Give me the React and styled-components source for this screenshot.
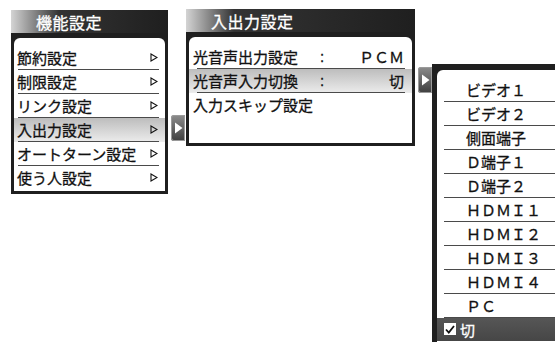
import React from "react";
import styled, { createGlobalStyle } from "styled-components";

const GlobalStyle = createGlobalStyle`
  html, body {
    margin: 0;
    padding: 0;
    background: #ffffff;
    overflow: hidden;
  }
  body {
    font-family: "Noto Sans CJK JP", "Liberation Sans", sans-serif;
    color: #111;
  }
`;

const Screen = styled.div`
  width: 555px;
  height: 342px;
  display: flex;
  align-items: flex-start;
  padding: 9px 0 0 11px;
  box-sizing: border-box;
  overflow: hidden;
`;

const Panel = styled.div`
  width: ${(p) => p.$width}px;
  margin-top: ${(p) => p.$top || 0}px;
  margin-right: ${(p) => p.$gapRight || 0}px;
  flex-shrink: 0;
  display: flex;
  flex-direction: column;
`;

const Header = styled.div`
  height: 23px;
  display: flex;
  align-items: center;
  padding-left: 25px;
  background: linear-gradient(to right, #d4d4d4 0px, #333 48px, #1f1f1f 100%);
  color: #fff;
  font-size: 16px;
  font-weight: 400;
  -webkit-text-stroke: 0.3px #fff;
  letter-spacing: 0.5px;
`;

const Frame = styled.div`
  background: #1f1f1f;
  padding: ${(p) => (p.$open ? "6px 0 0 5px" : "5px 3px 3px 3px")};
`;

const Sheet = styled.div`
  background: #fff;
  border-radius: ${(p) => (p.$open ? "6px 0 0 0" : "6px 6px 0 0")};
  padding-top: 8px;
  height: ${(p) => p.$height}px;
  box-sizing: border-box;
`;

const Row = styled.div`
  position: relative;
  height: 24px;
  display: flex;
  align-items: center;
  padding: 0 ${(p) => p.$padRight || 0}px 1px ${(p) => p.$padLeft}px;
  box-sizing: border-box;
  font-size: 15px;
  font-weight: 400;
  -webkit-text-stroke: 0.3px currentColor;
  background: ${(p) =>
    p.$active ? "linear-gradient(to bottom, #bdbdbd, #ececec)" : "transparent"};

  &::after {
    content: "";
    display: ${(p) => (p.$last ? "none" : "block")};
    position: absolute;
    left: ${(p) => p.$lineLeft}px;
    right: ${(p) => p.$lineRight}px;
    bottom: 0;
    height: 1px;
    background: #4a4a4a;
  }
`;

const Label = styled.span`
  flex: ${(p) => (p.$fixed ? "0 0 127px" : "1")};
`;

const Colon = styled.span`
  font-family: "Liberation Sans", sans-serif;
`;

const Value = styled.span`
  flex: 1;
  text-align: right;
`;

const ChoiceRow = styled(Row)`
  background: ${(p) => (p.$selected ? "linear-gradient(to bottom, #565656, #464646)" : "transparent")};
  color: ${(p) => (p.$selected ? "#fff" : "#111")};
  height: ${(p) => (p.$selected ? 23 : 24)}px;
`;

const Check = styled.span`
  width: 12px;
  height: 12px;
  background: #fff;
  margin-right: 4px;
  display: flex;
  align-items: center;
  justify-content: center;
`;

const Connector = styled.div`
  width: 14px;
  height: 26px;
  margin-top: ${(p) => p.$top}px;
  margin-right: ${(p) => p.$gapRight}px;
  flex-shrink: 0;
  border-radius: 3px 0 0 3px;
  background: linear-gradient(to bottom, #8c8c8c, #3e3e3e);
  box-shadow: inset 0 0 0 1px #9a9a9a;
  display: flex;
  align-items: center;
  justify-content: center;
`;

const Arrow = () => (
  <svg width="8" height="9" viewBox="0 0 8 9">
    <polygon points="1,1 7,4.5 1,8" fill="none" stroke="#111" strokeWidth="1.1" />
  </svg>
);

const Pointer = () => (
  <svg width="9" height="12" viewBox="0 0 9 12">
    <polygon points="1,0.5 8.5,6 1,11.5" fill="#fff" />
  </svg>
);

const mainItems = [
  "節約設定",
  "制限設定",
  "リンク設定",
  "入出力設定",
  "オートターン設定",
  "使う人設定",
];

const ioItems = [
  { label: "光音声出力設定", value: "ＰＣＭ" },
  { label: "光音声入力切換", value: "切", active: true },
  { label: "入力スキップ設定" },
];

const inputs = [
  "ビデオ１",
  "ビデオ２",
  "側面端子",
  "Ｄ端子１",
  "Ｄ端子２",
  "ＨＤＭＩ１",
  "ＨＤＭＩ２",
  "ＨＤＭＩ３",
  "ＨＤＭＩ４",
  "ＰＣ",
];

const App = () => {
  return (
    <>
      <GlobalStyle />
      <Screen>
        <Panel $width={157} $top={1} $gapRight={3}>
          <Header>機能設定</Header>
          <Frame>
            <Sheet $height={153}>
              {mainItems.map((item, i) => (
                <Row
                  key={item}
                  $padLeft={3}
                  $padRight={7}
                  $lineLeft={4}
                  $lineRight={6}
                  $active={item === "入出力設定"}
                  $last={i === mainItems.length - 1}
                >
                  <Label>{item}</Label>
                  <Arrow />
                </Row>
              ))}
            </Sheet>
          </Frame>
        </Panel>

        <Connector $top={106} $gapRight={1}>
          <Pointer />
        </Connector>

        <Panel $width={229} $gapRight={3}>
          <Header>入出力設定</Header>
          <Frame>
            <Sheet $height={106}>
              {ioItems.map((item, i) => (
                <Row
                  key={item.label}
                  $padLeft={4}
                  $padRight={8}
                  $lineLeft={8}
                  $lineRight={7}
                  $active={item.active}
                  $last={i === ioItems.length - 1}
                >
                  <Label $fixed={!!item.value}>{item.label}</Label>
                  {item.value && <Colon>:</Colon>}
                  {item.value && <Value>{item.value}</Value>}
                </Row>
              ))}
            </Sheet>
          </Frame>
        </Panel>

        <Connector $top={58} $gapRight={0}>
          <Pointer />
        </Connector>

        <Panel $width={130} $top={55}>
          <Frame $open>
            <Sheet $open $height={280}>
              {inputs.map((item) => (
                <ChoiceRow key={item} $padLeft={29} $lineLeft={7} $lineRight={0}>
                  <Label>{item}</Label>
                </ChoiceRow>
              ))}
              <ChoiceRow $selected $last $padLeft={7} $lineLeft={0} $lineRight={0}>
                <Check>
                  <svg width="10" height="9" viewBox="0 0 10 9">
                    <polyline points="1,4.5 3.8,7.5 9,1" fill="none" stroke="#111" strokeWidth="1.8" />
                  </svg>
                </Check>
                <Label>切</Label>
              </ChoiceRow>
            </Sheet>
          </Frame>
        </Panel>
      </Screen>
    </>
  );
};

export default App;
